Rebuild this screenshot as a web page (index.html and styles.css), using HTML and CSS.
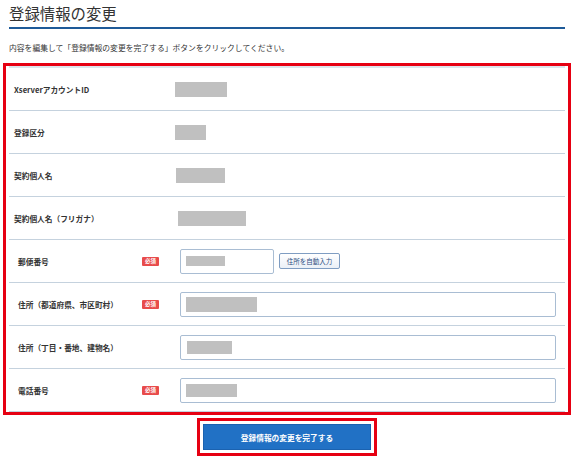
FILE: index.html
```html
<!DOCTYPE html>
<html lang="ja">
<head>
<meta charset="utf-8">
<title>登録情報の変更</title>
<link rel="stylesheet" href="styles.css">
</head>
<body>
<div class="page">
  <h1 class="title">登録情報の変更</h1>
  <p class="lead">内容を編集して「登録情報の変更を完了する」ボタンをクリックしてください。</p>
  <div class="mark">
    <div class="table">
      <div class="row">
        <div class="label">XserverアカウントID</div>
        <div class="value"><span class="redact" style="width:52px"></span></div>
      </div>
      <div class="row">
        <div class="label">登録区分</div>
        <div class="value"><span class="redact" style="width:31px"></span></div>
      </div>
      <div class="row">
        <div class="label">契約個人名</div>
        <div class="value"><span class="redact shift1" style="width:49px"></span></div>
      </div>
      <div class="row">
        <div class="label">契約個人名（フリガナ）</div>
        <div class="value"><span class="redact shift3" style="width:68px"></span></div>
      </div>
      <div class="row edit">
        <div class="label">郵便番号</div>
        <div class="badge-col"><span class="badge">必須</span></div>
        <div class="field">
          <div class="input zip"><span class="redact small" style="width:39px"></span></div>
          <button class="auto" type="button">住所を自動入力</button>
        </div>
      </div>
      <div class="row edit">
        <div class="label">住所（都道府県、市区町村）</div>
        <div class="badge-col"><span class="badge">必須</span></div>
        <div class="field">
          <div class="input"><span class="redact" style="width:71px"></span></div>
        </div>
      </div>
      <div class="row edit">
        <div class="label">住所（丁目・番地、建物名）</div>
        <div class="badge-col"></div>
        <div class="field">
          <div class="input"><span class="redact mid shift1" style="width:45px"></span></div>
        </div>
      </div>
      <div class="row edit">
        <div class="label">電話番号</div>
        <div class="badge-col"><span class="badge">必須</span></div>
        <div class="field">
          <div class="input"><span class="redact mid" style="width:51px"></span></div>
        </div>
      </div>
    </div>
  </div>
  <div class="submit-wrap">
    <div class="submit-mark">
      <button class="submit" type="button">登録情報の変更を完了する</button>
    </div>
  </div>
</div>
</body>
</html>
```

FILE: styles.css
```css
* {
  box-sizing: border-box;
}

body {
  margin: 0;
  background: #ffffff;
  color: #333333;
  font-family: "Noto Sans CJK JP", "Noto Sans", sans-serif;
}

.page {
  width: 580px;
  padding: 0 15px 0 9px;
}

.title {
  margin: 0;
  font-size: 15.4px;
  font-weight: 400;
  line-height: 27px;
  color: #333333;
  border-bottom: 2px solid #1e5a98;
}

.lead {
  margin: 13px 0 9px;
  font-size: 7.8px;
  line-height: 12px;
  color: #333333;
}

.mark {
  margin: 0 -6px;
  border: 3px solid #e60012;
  padding: 0 3px;
}

.table {
  border-top: 2px solid #dde4ec;
}

.row {
  display: flex;
  align-items: center;
  height: 43px;
  border-bottom: 1px solid #c5d2de;
}

.label {
  flex: none;
  width: 166px;
  padding-left: 5px;
  font-size: 7.7px;
  font-weight: 700;
  color: #333333;
  white-space: nowrap;
}

.edit .label {
  width: 133px;
  padding-left: 9px;
}

.value {
  display: flex;
  align-items: center;
}

.badge-col {
  flex: none;
  width: 38px;
  display: flex;
  align-items: center;
}

.badge {
  display: inline-block;
  width: 17px;
  height: 9px;
  background: #e84b4b;
  color: #ffffff;
  font-size: 5.5px;
  font-weight: 700;
  line-height: 9px;
  text-align: center;
  border-radius: 1px;
}

.redact {
  display: block;
  height: 15px;
  background: #c0c0c0;
}

.redact.small {
  height: 10px;
}

.redact.mid {
  height: 13px;
}

.redact.shift1 {
  margin-left: 1px;
}

.redact.shift3 {
  margin-left: 3px;
}

.field {
  flex: 1;
  display: flex;
  align-items: center;
  padding-right: 9px;
}

.input {
  flex: 1;
  height: 25px;
  display: flex;
  align-items: center;
  padding-left: 5px;
  border: 1px solid #a9bdd3;
  border-radius: 2px;
  background: #ffffff;
}

.input.zip {
  flex: none;
  width: 94px;
}

.auto {
  margin: 0 0 0 5px;
  width: 61px;
  height: 16px;
  padding: 0;
  border: 1px solid #7f9dc2;
  border-radius: 2px;
  background: linear-gradient(#ffffff, #eaf0f7);
  color: #2b4c7e;
  font-family: "Noto Sans CJK JP", "Noto Sans", sans-serif;
  font-size: 6.5px;
  line-height: 14px;
}

.submit-wrap {
  display: flex;
  justify-content: center;
  margin-top: 3px;
}

.submit-mark {
  border: 3px solid #e60012;
  padding: 3px;
}

.submit {
  display: block;
  width: 168px;
  height: 26px;
  margin: 0;
  padding: 0;
  border: 1px solid #1b62b0;
  background: #2171c5;
  color: #ffffff;
  font-family: "Noto Sans CJK JP", "Noto Sans", sans-serif;
  font-size: 7.7px;
  font-weight: 700;
}
```
